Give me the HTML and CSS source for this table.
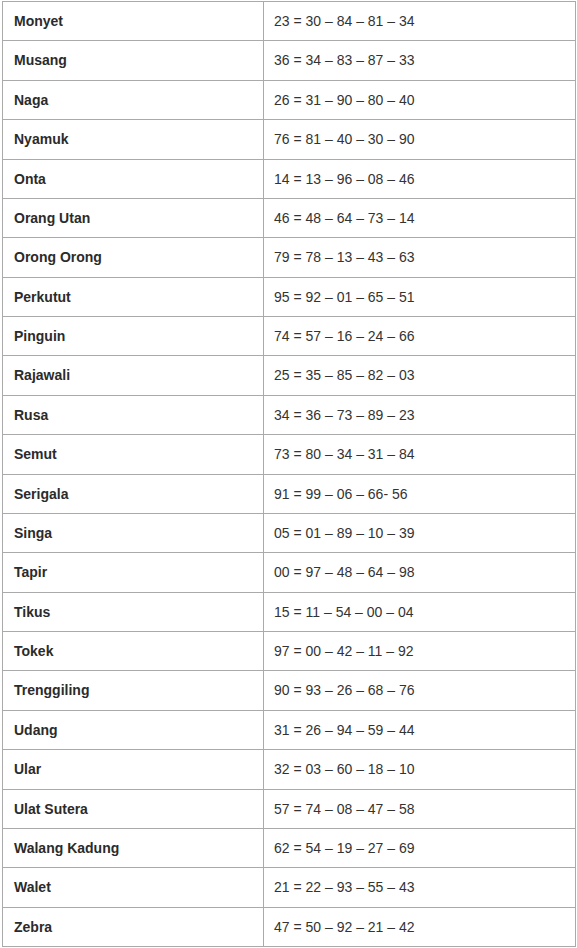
FILE: index.html
```html
<!DOCTYPE html>
<html lang="id">
<head>
<meta charset="utf-8">
<title>Tabel</title>
<link rel="stylesheet" href="styles.css">
</head>
<body>
<table class="tbl">
<tbody>
<tr><td class="name">Monyet</td><td class="num">23 = 30 – 84 – 81 – 34</td></tr>
<tr><td class="name">Musang</td><td class="num">36 = 34 – 83 – 87 – 33</td></tr>
<tr><td class="name">Naga</td><td class="num">26 = 31 – 90 – 80 – 40</td></tr>
<tr><td class="name">Nyamuk</td><td class="num">76 = 81 – 40 – 30 – 90</td></tr>
<tr><td class="name">Onta</td><td class="num">14 = 13 – 96 – 08 – 46</td></tr>
<tr><td class="name">Orang Utan</td><td class="num">46 = 48 – 64 – 73 – 14</td></tr>
<tr><td class="name">Orong Orong</td><td class="num">79 = 78 – 13 – 43 – 63</td></tr>
<tr><td class="name">Perkutut</td><td class="num">95 = 92 – 01 – 65 – 51</td></tr>
<tr><td class="name">Pinguin</td><td class="num">74 = 57 – 16 – 24 – 66</td></tr>
<tr><td class="name">Rajawali</td><td class="num">25 = 35 – 85 – 82 – 03</td></tr>
<tr><td class="name">Rusa</td><td class="num">34 = 36 – 73 – 89 – 23</td></tr>
<tr><td class="name">Semut</td><td class="num">73 = 80 – 34 – 31 – 84</td></tr>
<tr><td class="name">Serigala</td><td class="num">91 = 99 – 06 – 66- 56</td></tr>
<tr><td class="name">Singa</td><td class="num">05 = 01 – 89 – 10 – 39</td></tr>
<tr><td class="name">Tapir</td><td class="num">00 = 97 – 48 – 64 – 98</td></tr>
<tr><td class="name">Tikus</td><td class="num">15 = 11 – 54 – 00 – 04</td></tr>
<tr><td class="name">Tokek</td><td class="num">97 = 00 – 42 – 11 – 92</td></tr>
<tr><td class="name">Trenggiling</td><td class="num">90 = 93 – 26 – 68 – 76</td></tr>
<tr><td class="name">Udang</td><td class="num">31 = 26 – 94 – 59 – 44</td></tr>
<tr><td class="name">Ular</td><td class="num">32 = 03 – 60 – 18 – 10</td></tr>
<tr><td class="name">Ulat Sutera</td><td class="num">57 = 74 – 08 – 47 – 58</td></tr>
<tr><td class="name">Walang Kadung</td><td class="num">62 = 54 – 19 – 27 – 69</td></tr>
<tr><td class="name">Walet</td><td class="num">21 = 22 – 93 – 55 – 43</td></tr>
<tr><td class="name">Zebra</td><td class="num">47 = 50 – 92 – 21 – 42</td></tr>
</tbody>
</table>
</body>
</html>
```
FILE: styles.css
```css
html, body {
  margin: 0;
  padding: 0;
  background: #fff;
}
body {
  padding: 1px 0 0 2px;
  font-family: "Liberation Sans", Arial, sans-serif;
  font-size: 14px;
  color: #333;
}
.tbl {
  border-collapse: collapse;
  width: 574px;
  table-layout: fixed;
}
.tbl td {
  border: 1px solid #aaa;
  padding: 10px 10px;
  line-height: 18.375px;
  vertical-align: middle;
  white-space: nowrap;
}
.tbl .name {
  width: 239px;
  padding-left: 11px;
  font-weight: bold;
  color: #2b2b2b;
}
.tbl .num {
  color: #333;
}
```
